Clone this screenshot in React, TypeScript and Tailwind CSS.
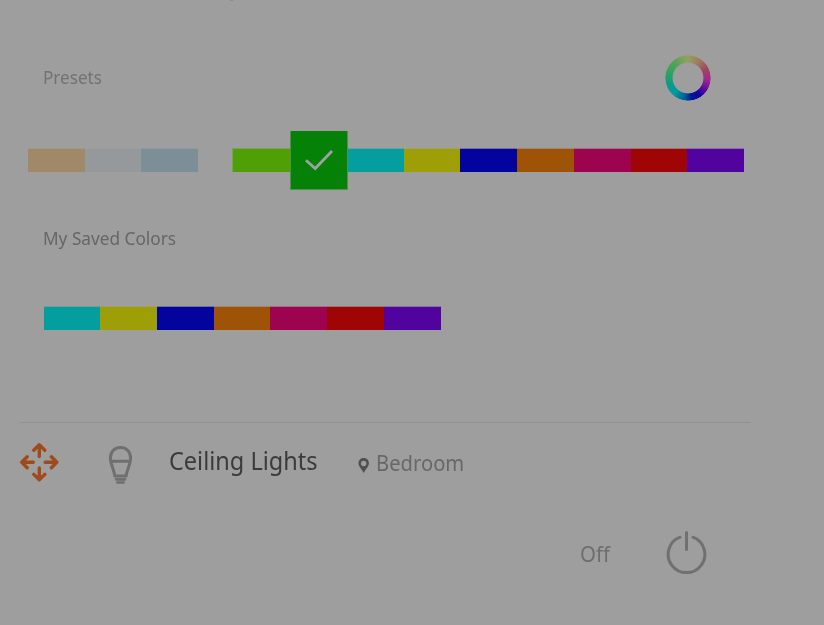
const whites = ['bg-[#a08969]', 'bg-[#96999b]', 'bg-[#7c8f97]'];
const saved = ['bg-[#059e9f]', 'bg-[#9e9e06]', 'bg-[#03039e]', 'bg-[#9f5306]', 'bg-[#9e0350]', 'bg-[#9f0505]', 'bg-[#50039e]'];

function Swatch({ color, width }: { color: string; width: string }) {
  return <div className={`h-6 border-t border-[#9e9e9e]/70 ${color} ${width}`} />;
}

const widths = ['w-[56px]', 'w-[57px]', 'w-[57px]', 'w-[56px]', 'w-[57px]', 'w-[57px]', 'w-[57px]'];
const presetWidths = ['w-[56px]', 'w-[56px]', 'w-[57px]', 'w-[57px]', 'w-[57px]', 'w-[56px]', 'w-[57px]'];

export default function App() {
  return (
    <main className="flex h-[625px] w-[824px] flex-col overflow-hidden bg-[#9e9e9e] font-['Noto_Sans',sans-serif]">
      <div className="ml-[230px] h-px w-[3px] shrink-0 bg-[#9e8878]" />
      <header className="mt-[54px] flex h-[46px] shrink-0 items-center justify-between pr-[113px] pl-[43px]">
        <h2 className="mb-0.5 origin-left scale-x-[0.95] text-[18px] leading-6 text-[#727272]">Presets</h2>
        <div className="size-[46px] rounded-full bg-[conic-gradient(#95a05c_0deg,#a07860_35deg,#a04460_65deg,#a02890_95deg,#68109c_120deg,#1800a0_145deg,#001894_170deg,#005f98_190deg,#009a9f_220deg,#0c9a8a_250deg,#30a35c_285deg,#55a552_320deg,#95a05c_360deg)] [mask-image:radial-gradient(circle,transparent_15px,black_15.8px,black_22.3px,transparent_23px)]" />
      </header>
      <div className="mt-[30px] flex h-[59px] shrink-0 items-start pl-7">
        <div className="flex pt-[17px]">
          {whites.map((c, i) => <Swatch key={c} color={c} width={['w-[57px]', 'w-[56px]', 'w-[57px]'][i]} />)}
        </div>
        <div className="ml-[34px] flex items-start">
          <div className="mt-[17px] h-6 w-[58px] border-t border-l border-[#9e9e9e]/60 bg-[#509f05]" />
          <div className="flex h-[59px] w-[58px] items-center justify-center border-x border-b border-[#9e9e9e]/50 bg-[#058107]">
            <svg width="30" height="22" viewBox="0 0 30 22" fill="none" stroke="#a0a0a0" strokeWidth="2.8">
              <path d="M2 11.3 11.2 19.5 28 2" />
            </svg>
          </div>
          <div className="flex pt-[17px]">
            {saved.map((c, i) => <Swatch key={c} color={c} width={presetWidths[i]} />)}
          </div>
        </div>
      </div>
      <h2 className="mt-9 ml-[43px] h-6 origin-left scale-x-[0.957] self-start text-[18px] leading-6 text-[#666]">My Saved Colors</h2>
      <div className="mt-14 flex h-6 shrink-0 pl-11">
        {saved.map((c, i) => <Swatch key={c} color={c} width={widths[i]} />)}
      </div>
      <div className="mt-[92px] ml-5 h-px w-[731px] shrink-0 bg-[#919191]" />
      <section className="flex h-[78px] shrink-0 items-center pl-5">
        <svg className="mt-0.5" width="40" height="40" viewBox="0 0 40 40" fill="none" stroke="#a04a1c" strokeWidth="3.4" strokeLinecap="round" strokeLinejoin="round">
          <path d="M19.3 13.5V2.2M13.8 7.2 19.3 1.8l5.5 5.4M19.3 25v11.5M13.8 31.4l5.5 5.4 5.5-5.4M13.3 19.3h-11M7.2 13.8 1.8 19.3l5.4 5.5M25.2 19.3h11M31.4 13.8l5.4 5.5-5.4 5.5" />
        </svg>
        <svg className="mt-1.5 ml-12" width="26" height="40" viewBox="0 0 26 40" fill="none" stroke="#6f6f6f" strokeWidth="3">
          <path d="M2.4 13.2C2.4 6.4 7 2.4 12.5 2.4S22.6 6.4 22.6 13.2C22.6 19 19.2 24 18.1 31H6.9C5.8 24 2.4 19 2.4 13.2ZM3 16.2H22" />
          <path d="M8 34.3h9M9.4 37.5h6.2" strokeWidth="2.7" strokeLinecap="round" />
        </svg>
        <h1 className="mb-[5px] ml-[35px] w-[188px] origin-left scale-x-[0.94] text-[25px] leading-8 whitespace-nowrap text-[#3b3b3b]">Ceiling Lights</h1>
        <svg className="mt-[7px] ml-px" width="12" height="16" viewBox="0 0 12 16">
          <path fill="#505050" fillRule="evenodd" d="M5.7 0C2.6 0 .5 2.2.5 5.2.5 8.5 3.7 10.9 5.7 15c2-4.1 5.2-6.5 5.2-9.8C10.9 2.2 8.8 0 5.7 0Zm0 2.8a2.7 2.7 0 1 1 0 5.4 2.7 2.7 0 0 1 0-5.4Z" />
        </svg>
        <span className="mt-0.5 ml-1.5 origin-left scale-x-[0.94] text-[21.5px] leading-7 text-[#686868]">Bedroom</span>
      </section>
      <section className="mt-[27px] flex h-[50px] shrink-0 items-center pl-[580px]">
        <span className="mt-0.5 w-[85px] origin-left scale-x-[0.95] text-[21.5px] leading-7 text-[#6e6e6e]">Off</span>
        <svg width="44" height="46" viewBox="0 0 44 46" fill="none" stroke="#707070" strokeWidth="3" strokeLinecap="round">
          <path d="M15 7.2a18.3 18.3 0 1 0 13 0M21.5 2.5v17" />
        </svg>
      </section>
    </main>
  );
}
